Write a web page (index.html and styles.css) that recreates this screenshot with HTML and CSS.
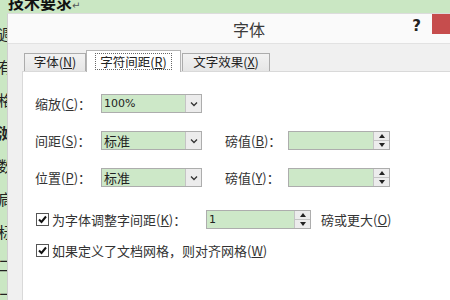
FILE: index.html
```html
<!DOCTYPE html>
<html lang="zh">
<head>
<meta charset="utf-8">
<link rel="stylesheet" href="styles.css">
</head>
<body>
<div class="doc">
  <div class="doc-head">技术要求<span class="ret">↵</span></div>
  <div class="doc-lines">
    <div>週</div>
    <div>有</div>
    <div>格</div>
    <div class="b">洳</div>
    <div>数</div>
    <div>扃</div>
    <div>标</div>
    <div>二</div>
    <div>二</div>
  </div>
</div>

<div class="dialog">
  <div class="titlebar">
    <div></div>
    <div class="title">字体</div>
    <div class="tb-right"><span class="help">?</span><span class="close"></span></div>
  </div>
  <div class="dbody">
    <div class="tabs">
      <div class="tab t1">字体(<u>N</u>)</div>
      <div class="tab active t2"><span class="focus">字符间距(<u>R</u>)</span></div>
      <div class="tab t3">文字效果(<u>X</u>)</div>
    </div>
    <div class="panel">
      <div class="grid">
        <div class="lbl">缩放(<u>C</u>)：</div>
        <div class="field select"><span class="val num">100%</span><span class="dd"><svg width="8" height="6" viewBox="0 0 8 6"><path d="M1 1.5 L4 4.5 L7 1.5" fill="none" stroke="#333" stroke-width="1.3"/></svg></span></div>
        <div></div><div></div><div></div>

        <div class="lbl">间距(<u>S</u>)：</div>
        <div class="field select"><span class="val">标准</span><span class="dd"><svg width="8" height="6" viewBox="0 0 8 6"><path d="M1 1.5 L4 4.5 L7 1.5" fill="none" stroke="#333" stroke-width="1.3"/></svg></span></div>
        <div></div>
        <div class="lbl">磅值(<u>B</u>)：</div>
        <div class="field spin"><span class="val"></span><span class="sp"><span class="up"></span><span class="dn"></span></span></div>

        <div class="lbl">位置(<u>P</u>)：</div>
        <div class="field select"><span class="val">标准</span><span class="dd"><svg width="8" height="6" viewBox="0 0 8 6"><path d="M1 1.5 L4 4.5 L7 1.5" fill="none" stroke="#333" stroke-width="1.3"/></svg></span></div>
        <div></div>
        <div class="lbl">磅值(<u>Y</u>)：</div>
        <div class="field spin"><span class="val"></span><span class="sp"><span class="up"></span><span class="dn"></span></span></div>
      </div>

      <div class="crow r1">
        <span class="cb"><svg width="11" height="11" viewBox="0 0 11 11"><path d="M2 5.5 L4.5 8 L9 2.5" fill="none" stroke="#111" stroke-width="2"/></svg></span>
        <span class="clbl">为字体调整字间距(<u>K</u>)：</span>
        <div class="field spin kern"><span class="val num">1</span><span class="sp"><span class="up"></span><span class="dn"></span></span></div>
        <span class="suffix">磅或更大(<u>O</u>)</span>
      </div>
      <div class="crow r2">
        <span class="cb"><svg width="11" height="11" viewBox="0 0 11 11"><path d="M2 5.5 L4.5 8 L9 2.5" fill="none" stroke="#111" stroke-width="2"/></svg></span>
        <span class="clbl">如果定义了文档网格，则对齐网格(<u>W</u>)</span>
      </div>
    </div>
  </div>
</div>
</body>
</html>
```

FILE: styles.css
```css
html, body {
  margin: 0;
  padding: 0;
}
body {
  width: 450px;
  height: 300px;
  overflow: hidden;
  position: relative;
  background: #cae7c3;
  font-family: "Noto Sans CJK SC", "DejaVu Sans", sans-serif;
  color: #222;
}
u { text-decoration: underline; text-underline-offset: 1px; }

.doc-head {
  margin-top: -6px;
  margin-left: 8px;
  font-size: 16px;
  line-height: 16px;
  font-weight: bold;
  color: #111;
}
.doc-head .ret {
  font-weight: normal;
  font-size: 10px;
  color: #555;
}
.doc-lines {
  margin-top: 4px;
  margin-left: -2px;
  font-size: 15px;
  line-height: 33px;
  color: #222;
}
.doc-lines .b { font-weight: bold; }

.dialog {
  position: absolute;
  left: 7px;
  top: 13px;
  width: 482px;
  height: 300px;
  border-left: 1px solid #cfcfcf;
  border-top: 1px solid #dcdcdc;
  background: #f0f0f0;
}
.titlebar {
  display: grid;
  grid-template-columns: 1fr auto 1fr;
  height: 29px;
  background: #fafafa;
  border-bottom: 1px solid #e2e2e2;
}
.title {
  font-size: 16px;
  line-height: 29px;
  color: #3a3a3a;
  padding-top: 1px;
}
.tb-right {
  display: flex;
  justify-content: flex-end;
  align-items: flex-start;
}
.help {
  font-family: "DejaVu Sans", sans-serif;
  font-weight: bold;
  font-size: 15px;
  line-height: 15px;
  margin-top: 5px;
  margin-right: 11px;
  color: #222;
}
.close {
  width: 58px;
  height: 20px;
  background: #c64d4d;
}

.dbody {
  padding: 6px 0 0 14px;
}
.tabs {
  display: flex;
  align-items: flex-end;
  height: 21px;
  padding-left: 2px;
  position: relative;
  z-index: 1;
}
.tab {
  box-sizing: border-box;
  height: 18px;
  border: 1px solid #acacac;
  border-bottom: none;
  background: linear-gradient(#f2f2f2, #e6e6e6);
  font-size: 12.5px;
  line-height: 16px;
  text-align: center;
  color: #222;
}
.t1 { width: 62px; }
.t2 { width: 95px; }
.t3 { width: 88px; margin-left: 1px; }
.tab.active {
  background: #fff;
  border-color: #b5b5b5;
  margin-bottom: -1px;
  height: 22px;
  padding-top: 2px;
}
.focus {
  display: inline-block;
  border: 1px dotted #666;
  padding: 0 4px;
  line-height: 15px;
}

.panel {
  box-sizing: border-box;
  height: 260px;
  background: #fff;
  border: 1px solid #d9d9d9;
  padding: 22px 0 0 12px;
}
.grid {
  display: grid;
  grid-template-columns: 66px 101px 23px 63px 102px;
  grid-auto-rows: 19px;
  row-gap: 18px;
  align-items: center;
}
.lbl {
  font-size: 13px;
  color: #333;
  white-space: nowrap;
}
.field {
  box-sizing: border-box;
  height: 19px;
  border: 1px solid #adadad;
  background: #cde8c8;
  display: flex;
}
.field .val {
  flex: 1;
  font-size: 13px;
  line-height: 17px;
  padding-left: 2px;
  color: #222;
}
.field .val.num {
  font-family: "DejaVu Sans", sans-serif;
  font-size: 11px;
}
.dd {
  width: 15px;
  border-left: 1px solid #c4c4c4;
  background: #ececec;
  display: flex;
  align-items: center;
  justify-content: center;
}
.sp {
  width: 15px;
  border-left: 1px solid #c4c4c4;
  background: #ececec;
  display: flex;
  flex-direction: column;
}
.sp .up, .sp .dn {
  flex: 1;
  display: flex;
  align-items: center;
  justify-content: center;
}
.sp .up { border-bottom: 1px solid #c4c4c4; }
.sp .up::before {
  content: "";
  border-left: 3.5px solid transparent;
  border-right: 3.5px solid transparent;
  border-bottom: 4px solid #222;
}
.sp .dn::before {
  content: "";
  border-left: 3.5px solid transparent;
  border-right: 3.5px solid transparent;
  border-top: 4px solid #222;
}

.crow {
  display: flex;
  align-items: center;
  height: 19px;
  padding-left: 1px;
}
.r1 { margin-top: 23px; }
.r2 { margin-top: 12px; }
.cb {
  box-sizing: border-box;
  width: 13px;
  height: 13px;
  border: 1px solid #555;
  background: #fff;
  display: flex;
  align-items: center;
  justify-content: center;
}
.clbl {
  font-size: 13px;
  color: #333;
  margin-left: 3px;
  white-space: nowrap;
}
.r1 .clbl { width: 154px; }
.kern { width: 105px; }
.suffix {
  font-size: 13px;
  color: #333;
  margin-left: 10px;
  white-space: nowrap;
}
```
